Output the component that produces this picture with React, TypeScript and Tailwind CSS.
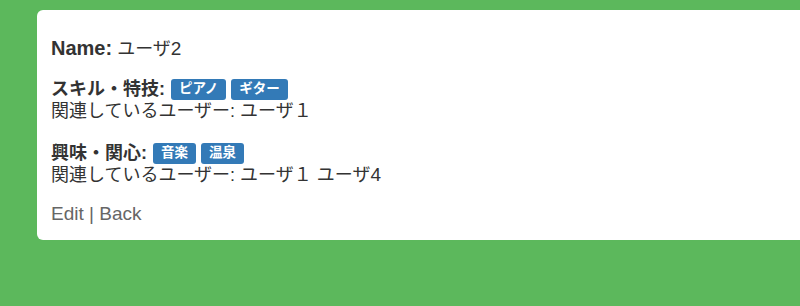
import React from "react";

const Label = ({ children }: { children: React.ReactNode }) => (
  <span className="inline-block rounded-[3px] bg-[#337ab7] px-[8px] pt-[3px] pb-[4px] align-[2px] text-[13.5px] font-bold leading-[14px] text-white">
    {children}
  </span>
);

export default function App() {
  return (
    <div
      className="h-[306px] w-[800px] overflow-hidden bg-[#5cb85c] pt-[10px] pl-[37px]"
      style={{ fontFamily: '"Liberation Sans", "Noto Sans CJK JP", sans-serif' }}
    >
      <div className="w-[800px] rounded-[6px] bg-white pt-[27px] pb-[15px] pl-[14px] text-[18px] leading-[22px] text-[#333]">
        <div>
          <b className="text-[20px]">Name:</b> ユーザ<span className="text-[19px]">2</span>
        </div>
        <div className="mt-[18px]">
          <div className="flex items-center gap-[5px]">
            <b className="mr-[1px]">スキル・特技:</b>
            <Label>ピアノ</Label>
            <Label>ギター</Label>
          </div>
          <div>関連しているユーザー: ユーザ１</div>
        </div>
        <div className="mt-[20px]">
          <div className="flex items-center gap-[5px]">
            <b className="mr-[1px]">興味・関心:</b>
            <Label>音楽</Label>
            <Label>温泉</Label>
          </div>
          <div>
            関連しているユーザー: ユーザ１ ユーザ<span className="text-[19px]">4</span>
          </div>
        </div>
        <div className="mt-[17px] text-[19px] leading-[22px] text-[#666]">
          <a>Edit</a> | <a>Back</a>
        </div>
      </div>
    </div>
  );
}
